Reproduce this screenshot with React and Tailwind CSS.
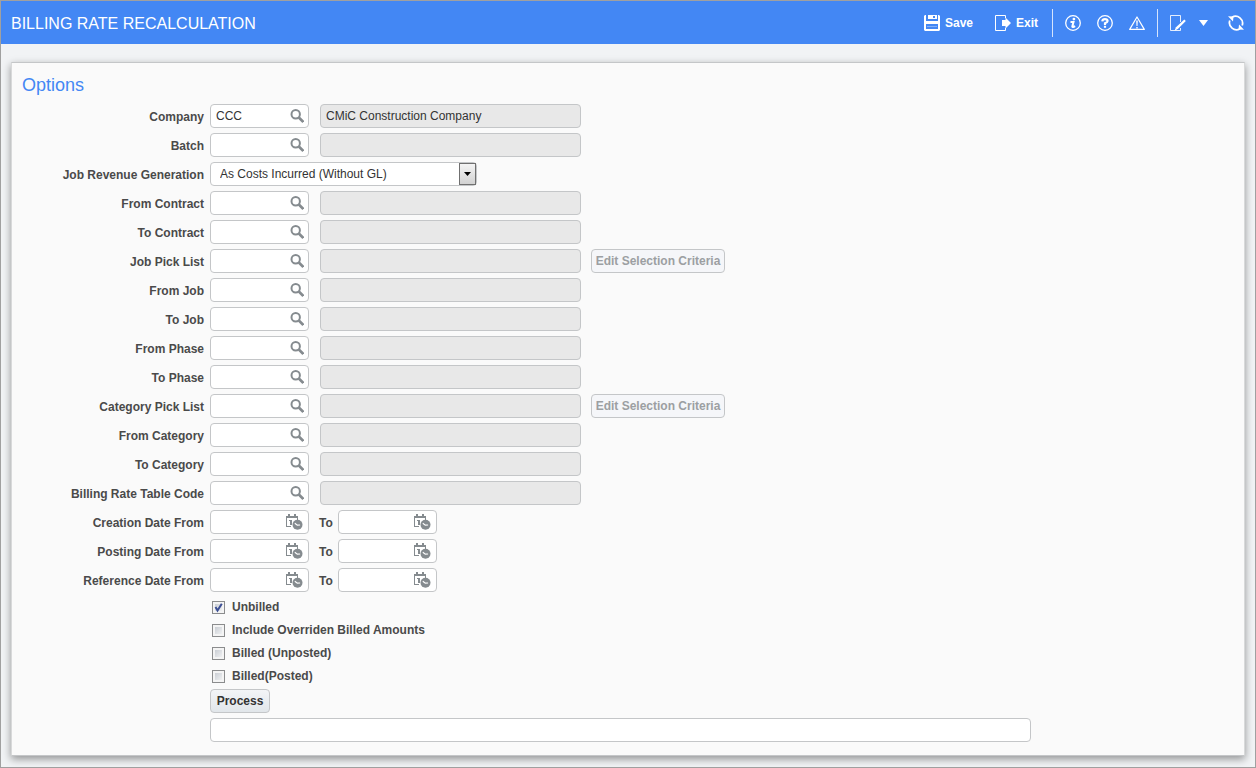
import React, { useState } from 'react';

const lookupRows = [
  { id: 'batch', label: 'Batch' },
  { id: 'revenue', label: 'Job Revenue Generation', type: 'select' },
  { id: 'fromContract', label: 'From Contract' },
  { id: 'toContract', label: 'To Contract' },
  { id: 'jobPickList', label: 'Job Pick List', editable: true },
  { id: 'fromJob', label: 'From Job' },
  { id: 'toJob', label: 'To Job' },
  { id: 'fromPhase', label: 'From Phase' },
  { id: 'toPhase', label: 'To Phase' },
  { id: 'categoryPickList', label: 'Category Pick List', editable: true },
  { id: 'fromCategory', label: 'From Category' },
  { id: 'toCategory', label: 'To Category' },
  { id: 'rateTable', label: 'Billing Rate Table Code' },
];

const dateRows = [
  { id: 'creation', label: 'Creation Date From' },
  { id: 'posting', label: 'Posting Date From' },
  { id: 'reference', label: 'Reference Date From' },
];

const flags = [
  { id: 'unbilled', label: 'Unbilled' },
  { id: 'overriden', label: 'Include Overriden Billed Amounts' },
  { id: 'unposted', label: 'Billed (Unposted)' },
  { id: 'posted', label: 'Billed(Posted)' },
];

// Icons
function SaveIcon() {
  return (
    <svg width="16" height="16" viewBox="0 0 16 16" aria-hidden="true">
      <path fill="#fff" fillRule="evenodd" d="M1 0h1v6h12V0h1l1 1v14l-1 1H1l-1-1V1zM2 9v5h12V9z" />
      <path fill="#fff" fillRule="evenodd" d="M4 0h9v4H4zM9 1v2h2V1z" />
      <path fill="#fff" d="M3 11h10v1H3z" opacity=".35" />
    </svg>
  );
}

function ExitIcon() {
  return (
    <svg width="17" height="16" viewBox="0 0 17 16" aria-hidden="true">
      <path fill="none" stroke="#fff" d="M10.500 3V.5H.5v15h10V13" />
      <path fill="#fff" d="M7 5h3.500V2.500L16 8l-5.500 5.500V11H7z" />
    </svg>
  );
}

function InfoIcon() {
  return (
    <svg width="16" height="16" viewBox="0 0 16 16" aria-hidden="true">
      <circle cx="8" cy="8" r="7.300" fill="none" stroke="#fff" strokeWidth="1.300" />
      <circle cx="8.900" cy="4.100" r="1.400" fill="#fff" />
      <path fill="none" stroke="#fff" strokeWidth="2" d="M5.500 7h3L7.300 11.500q.2 1.200 2.800-.4" />
    </svg>
  );
}

function HelpIcon() {
  return (
    <svg width="16" height="16" viewBox="0 0 16 16" aria-hidden="true">
      <circle cx="8" cy="8" r="7.300" fill="none" stroke="#fff" strokeWidth="1.300" />
      <path fill="none" stroke="#fff" strokeWidth="2.200" d="M5.300 6.300Q5.500 4.200 8 4.200t2.600 1.900Q10.600 7.300 8 8.300V10" />
      <path fill="#fff" d="M6.900 10.800h2.200v2H6.900z" />
    </svg>
  );
}

function WarningIcon() {
  return (
    <svg width="16" height="16" viewBox="0 0 16 16" aria-hidden="true">
      <path fill="none" stroke="#fff" strokeWidth="1.200" strokeLinejoin="round" d="M8 2L15.300 14.400H.7z" />
      <path fill="#fff" d="M7.200 5.500h1.600L8.500 11h-1zM7.300 12h1.400v1.400H7.300z" />
    </svg>
  );
}

function NoteIcon() {
  return (
    <svg width="16" height="16" viewBox="0 0 16 16" aria-hidden="true">
      <path fill="none" stroke="#fff" d="M10.500 7V.5H.5v15h10V13" opacity=".85" />
      <path fill="#fff" d="M14.300 4.500l1.500 1.400-8 8-3.300 1.900 1.500-3.500z" />
    </svg>
  );
}

function RefreshIcon() {
  return (
    <svg width="18" height="16" viewBox="0 0 18 16" aria-hidden="true">
      <path fill="none" stroke="#fff" strokeWidth="1.800" d="M5 2.300a7 7 0 0 1 10.200 8.200M13 13.700A7 7 0 0 1 2.800 5.500" />
      <path fill="#fff" d="M1 1.200L6.500 1.500 6 6.500zM17 14.800L11.500 14.500 12 9.500z" />
    </svg>
  );
}

function SearchIcon() {
  return (
    <svg width="14" height="14" viewBox="0 0 14 14" aria-hidden="true">
      <circle cx="5.700" cy="5.300" r="4.200" fill="none" stroke="#858b8f" strokeWidth="2" />
      <path fill="none" stroke="#858b8f" strokeWidth="2.600" d="M8.800 8.500l4.500 4.500" />
    </svg>
  );
}

function CalendarIcon() {
  return (
    <svg width="18" height="16" viewBox="0 0 18 16" aria-hidden="true">
      <path fill="#858b8f" d="M0 2h2V0h2v2h4V0h2v2h2v4h-1V4H1v8h4v1H0z" />
      <path fill="#858b8f" d="M3 6h3v5H4V7H3z" />
      <circle cx="11.500" cy="10.700" r="5" fill="#858b8f" />
      <path fill="none" stroke="#fff" strokeWidth="1.200" d="M8.800 9.300l2.500 1.900 2.800-.2" />
    </svg>
  );
}

function ToolButton({ label, children }) {
  return (
    <button type="button" aria-label={label} className="flex items-center">
      {children}
    </button>
  );
}

function FieldLabel({ htmlFor, children }) {
  return (
    <label htmlFor={htmlFor} className="w-[182px] shrink-0 pt-px text-right font-bold">
      {children}
    </label>
  );
}

// Text box with a picker button inside its right edge
function PickerInput({ id, label, icon, defaultValue = '' }) {
  return (
    <div className="flex h-6 w-[99px] shrink-0 items-center rounded-sm border border-[#c4c6c8] bg-white pr-1">
      <input
        id={id}
        type="text"
        aria-label={label}
        defaultValue={defaultValue}
        className="h-full min-w-0 flex-1 bg-transparent pl-[5px] text-[#333] outline-none"
      />
      <button type="button" aria-label={`Pick ${label}`} className="shrink-0">
        {icon}
      </button>
    </div>
  );
}

function LookupRow({ id, label, code, description = '', editable }) {
  return (
    <div className="flex h-6 items-center">
      <FieldLabel htmlFor={id}>{label}</FieldLabel>
      <div className="ml-[6px] flex">
        <PickerInput id={id} label={label} icon={<SearchIcon />} defaultValue={code} />
        <input
          type="text"
          readOnly
          aria-label={`${label} description`}
          value={description}
          className="ml-[11px] h-6 w-[261px] rounded-sm border border-[#c4c6c8] bg-[#e8e8e8] px-[5px] text-[#333] outline-none"
        />
        {editable && (
          <button
            type="button"
            disabled
            className="ml-[10px] h-6 w-[134px] whitespace-nowrap rounded-sm border border-[#c4c6c8] bg-[#f5f6f9] font-bold text-[#9c9fa2]"
          >
            Edit Selection Criteria
          </button>
        )}
      </div>
    </div>
  );
}

function SelectRow({ id, label }) {
  return (
    <div className="flex h-6 items-center">
      <FieldLabel htmlFor={id}>{label}</FieldLabel>
      <div className="relative ml-[6px] h-6 w-[267px]">
        <select
          id={id}
          className="h-6 w-full appearance-none rounded-sm border border-[#c4c6c8] bg-white pl-[9px] pr-5 text-[#333] outline-none"
        >
          <option>As Costs Incurred (Without GL)</option>
        </select>
        <span className="pointer-events-none absolute right-px top-px flex h-[22px] w-[17px] items-center justify-center border border-[#707070] bg-linear-to-b from-[#f4f4f4] to-[#d2d2d2]">
          <svg width="7" height="4" viewBox="0 0 7 4" aria-hidden="true">
            <path d="M0 0h7L3.500 4z" />
          </svg>
        </span>
      </div>
    </div>
  );
}

function DateRow({ id, label }) {
  return (
    <div className="flex h-6 items-center">
      <FieldLabel htmlFor={`${id}From`}>{label}</FieldLabel>
      <div className="ml-[6px] flex items-center">
        <PickerInput id={`${id}From`} label={label} icon={<CalendarIcon />} />
        <label htmlFor={`${id}To`} className="w-[29px] pl-[10px] pt-px font-bold">
          To
        </label>
        <PickerInput id={`${id}To`} label="To" icon={<CalendarIcon />} />
      </div>
    </div>
  );
}

function Flag({ id, label, checked, onChange }) {
  return (
    <div className="flex h-[23px] items-center">
      <span className="relative ml-[2px] flex h-[13px] w-[13px]">
        <input
          id={id}
          type="checkbox"
          checked={checked}
          onChange={onChange}
          className="h-[13px] w-[13px] appearance-none border border-[#8b8c8d] bg-linear-to-br from-[#c0c5cc] to-[#fafafa] shadow-[inset_0_0_0_2px_#f4f4f4]"
        />
        {checked && (
          <svg className="pointer-events-none absolute inset-0" width="13" height="13" viewBox="0 0 13 13" aria-hidden="true">
            <path fill="none" stroke="#3c4f94" strokeWidth="2" d="M3.500 6l2 3.500L9.800 2.800" />
          </svg>
        )}
      </span>
      <label htmlFor={id} className="ml-[7px] pb-[2px] font-bold">
        {label}
      </label>
    </div>
  );
}

export default function App() {
  const [checked, setChecked] = useState({ unbilled: true });

  const toggle = (id) => {
    setChecked({ ...checked, [id]: !checked[id] });
  };

  return (
    <div className="flex min-h-screen flex-col border border-[#a0a0a0] bg-[#f1f3f5] font-['Liberation_Sans',Arial,sans-serif] text-[12px] leading-4 text-[#4a4a4a]">
      {/* Title bar */}
      <header className="flex h-[43px] shrink-0 items-center justify-between bg-[#4387f4] px-[10px] text-white">
        <h1 className="pt-[2px] text-[16px] leading-5">BILLING RATE RECALCULATION</h1>
        <div className="flex items-center">
          <button type="button" className="flex items-center gap-[5px] font-bold">
            <SaveIcon />
            Save
          </button>
          <button type="button" className="ml-[22px] flex items-center gap-1 font-bold">
            <ExitIcon />
            Exit
          </button>
          <div className="ml-[14px] flex h-7 items-center gap-4 border-x border-[#d5e4fd] px-3">
            <ToolButton label="Information"><InfoIcon /></ToolButton>
            <ToolButton label="Help"><HelpIcon /></ToolButton>
            <ToolButton label="Warnings"><WarningIcon /></ToolButton>
          </div>
          <div className="ml-3 flex items-center">
            <ToolButton label="Notes"><NoteIcon /></ToolButton>
            <button type="button" aria-label="More notes" className="ml-[13px]">
              <svg width="9" height="6" viewBox="0 0 9 6" aria-hidden="true">
                <path fill="#fff" d="M0 0h9L4.500 6z" />
              </svg>
            </button>
            <div className="ml-[19px]">
              <ToolButton label="Refresh"><RefreshIcon /></ToolButton>
            </div>
          </div>
        </div>
      </header>

      {/* Options panel */}
      <main className="mx-[10px] mb-[11px] mt-[18px] flex-1 border border-t-[#c4c6c8] border-x-[#d8d9da] border-b-[#c4c6c8] bg-[#fafafa] px-[10px] pb-3 pt-3 shadow-[0_3px_8px_rgba(0,0,0,0.4)]">
        <h2 className="mb-[9px] text-[18px] leading-5 text-[#4387f4]">Options</h2>
        <form onSubmit={(e) => e.preventDefault()}>
          <div className="flex flex-col gap-[5px]">
            <LookupRow id="company" label="Company" code="CCC" description="CMiC Construction Company" />
            {lookupRows.map((row) =>
              row.type === 'select' ? (
                <SelectRow key={row.id} id={row.id} label={row.label} />
              ) : (
                <LookupRow key={row.id} id={row.id} label={row.label} editable={row.editable} />
              )
            )}
            {dateRows.map((row) => (
              <DateRow key={row.id} id={row.id} label={row.label} />
            ))}
          </div>

          <div className="ml-[188px] mt-1">
            {flags.map((flag) => (
              <Flag
                key={flag.id}
                id={flag.id}
                label={flag.label}
                checked={!!checked[flag.id]}
                onChange={() => toggle(flag.id)}
              />
            ))}
            <button
              type="submit"
              className="mt-px block h-6 w-[60px] rounded-sm border border-[#c4c6c8] bg-linear-to-b from-[#f3f5f7] to-[#e1e6ea] font-bold text-[#333]"
            >
              Process
            </button>
            <input
              type="text"
              aria-label="Process status"
              className="mt-[5px] block h-6 w-full max-w-[821px] rounded-sm border border-[#c4c6c8] bg-white px-[5px] outline-none"
            />
          </div>
        </form>
      </main>
    </div>
  );
}
